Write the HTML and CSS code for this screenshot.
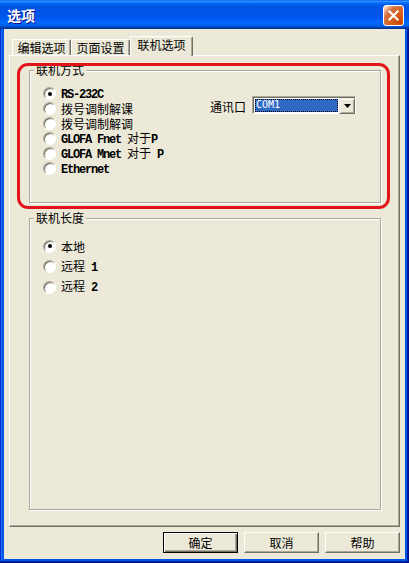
FILE: index.html
```html
<!DOCTYPE html>
<html>
  <head>
    <meta charset="UTF-8">
    <link rel="stylesheet" href="styles.css">
  </head>
  <body>
    <div class="window">
      <div class="titlebar">
        <span class="title">选项</span>
        <span class="close">
          <svg width="13" height="13" viewBox="0 0 13 13"><path d="M2.5 2.5 L10.5 10.5 M10.5 2.5 L2.5 10.5" stroke="#fff" stroke-width="2.2" stroke-linecap="square"/></svg>
        </span>
      </div>
      <div class="client">
        <div class="tabs">
          <div class="tab">编辑选项</div>
          <div class="tab">页面设置</div>
          <div class="tab active">联机选项</div>
        </div>
        <div class="panel">
          <div class="group group-mode">
            <div class="group-title">联机方式</div>
            <div class="group-body">
              <ul class="radios">
                <li><span class="radio checked"></span><span class="label"><span class="en">RS-232C</span></span></li>
                <li><span class="radio"></span><span class="label">拨号调制解课</span></li>
                <li><span class="radio"></span><span class="label">拨号调制解调</span></li>
                <li><span class="radio"></span><span class="label"><span class="en">GLOFA Fnet </span>对于<span class="en">P</span></span></li>
                <li><span class="radio"></span><span class="label"><span class="en">GLOFA Mnet </span>对于<span class="en"> P</span></span></li>
                <li><span class="radio"></span><span class="label"><span class="en">Ethernet</span></span></li>
              </ul>
              <div class="port">
                <span class="port-label">通讯口</span>
                <div class="combo">
                  <span class="combo-value">COM1</span>
                  <span class="combo-btn">
                    <svg width="7" height="4" viewBox="0 0 7 4"><path d="M0 0 H7 L3.5 4 Z" fill="#000"/></svg>
                  </span>
                </div>
              </div>
            </div>
          </div>
          <div class="group group-len">
            <div class="group-title">联机长度</div>
            <ul class="radios wide">
              <li><span class="radio checked"></span><span class="label">本地</span></li>
              <li><span class="radio"></span><span class="label">远程<span class="en"> 1</span></span></li>
              <li><span class="radio"></span><span class="label">远程<span class="en"> 2</span></span></li>
            </ul>
          </div>
        </div>
        <div class="buttons">
          <button class="btn default">确定</button>
          <button class="btn">取消</button>
          <button class="btn">帮助</button>
        </div>
        <div class="highlight"></div>
      </div>
    </div>
  </body>
</html>
```

FILE: styles.css
```css
body {
  margin: 0;
  font-family: "Noto Sans CJK SC", sans-serif;
  font-size: 12px;
  color: #000;
}

.window {
  width: 409px;
  height: 563px;
  box-sizing: border-box;
  padding: 0 4px 4px 4px;
  background: #0055ea;
  box-shadow: inset -1px -1px #00138c, inset 1px 1px #0831d9, inset -2px -2px #001ea0, inset 2px 2px #166aee;
  display: flex;
  flex-direction: column;
}

.titlebar {
  height: 29px;
  margin: 0 -4px;
  padding: 0 5px 0 7px;
  display: flex;
  align-items: center;
  justify-content: space-between;
  background: linear-gradient(to bottom, #0058ee 0%, #3593ff 4%, #288eff 6%, #127dff 8%, #036ffc 10%, #0262ee 14%, #0057e5 20%, #0054e3 24%, #0055eb 56%, #005bf5 66%, #026afe 76%, #0062ef 86%, #0052d6 92%, #0040ab 94%, #003092 100%);
}

.title {
  color: #fff;
  font-weight: bold;
  font-size: 14px;
  line-height: 16px;
  text-shadow: 1px 1px #0f1089;
}

.close {
  width: 21px;
  height: 21px;
  margin-top: 1px;
  box-sizing: border-box;
  border: 1px solid #fff;
  border-radius: 3px;
  display: flex;
  align-items: center;
  justify-content: center;
  background: radial-gradient(circle at 90% 90%, #cc4600 0%, #dc6527 55%, #cd7546 70%, #ffccb2 90%, #fff 100%);
}

.client {
  flex: 1;
  position: relative;
  background: #ece9d8;
  padding: 7px 5px 6px 5px;
  display: flex;
  flex-direction: column;
}

.tabs {
  height: 19px;
  padding-left: 3px;
  display: flex;
  align-items: flex-end;
}

.tab {
  height: 16px;
  box-sizing: border-box;
  width: 59px;
  text-align: center;
  line-height: 15px;
  border-top: 1px solid #fff;
  border-left: 1px solid #fff;
  border-right: 1px solid #716f64;
  box-shadow: inset -1px 0 #aca899;
  border-radius: 2px 2px 0 0;
  background: #ece9d8;
}

.tab.active {
  width: 63px;
  height: 20px;
  margin-bottom: -1px;
  line-height: 16px;
  position: relative;
  z-index: 1;
}

.panel {
  height: 472px;
  box-sizing: border-box;
  border: 1px solid;
  border-color: #fff #716f64 #716f64 #fff;
  box-shadow: inset -1px -1px #aca899;
  padding: 14px 18px 0 19px;
  display: flex;
  flex-direction: column;
  gap: 15px;
}

.group {
  box-sizing: border-box;
  border: 1px solid #aca899;
  box-shadow: inset 1px 1px #fff, 1px 1px #fff;
  display: flex;
  flex-direction: column;
}

.group-mode {
  height: 133px;
}

.group-len {
  height: 292px;
}

.group-title {
  align-self: flex-start;
  margin: -8px 0 0 4px;
  padding: 0 2px;
  line-height: 14px;
  background: #ece9d8;
}

.group-body {
  display: flex;
  align-items: flex-start;
  margin-top: 9px;
}

.radios {
  list-style: none;
  margin: 9px 0 0 0;
  padding: 0 0 0 13px;
  width: 180px;
  box-sizing: border-box;
}

.group-body .radios {
  margin-top: 0;
}

.radios li {
  height: 15px;
  line-height: 15px;
  display: flex;
  align-items: center;
  white-space: pre;
}

.radios.wide {
  margin-top: 11px;
}

.radios.wide li {
  height: 20.5px;
}

.label {
  line-height: 15px;
}

.radio {
  width: 13px;
  height: 13px;
  box-sizing: border-box;
  margin-right: 5px;
  border-radius: 50%;
  border: 1px solid;
  border-color: #aca899 #fff #fff #aca899;
  box-shadow: inset 1px 1px #716f64;
  background: #fff;
  display: flex;
  align-items: center;
  justify-content: center;
  flex-shrink: 0;
}

.radio.checked::after {
  content: "";
  width: 4px;
  height: 4px;
  border-radius: 50%;
  background: #000;
}

.en {
  font-family: "Liberation Mono", monospace;
  font-size: 12px;
  letter-spacing: -1.2px;
  font-weight: bold;
}

.port {
  display: flex;
  align-items: center;
  margin-top: 9px;
}

.port-label {
  width: 36px;
  margin-right: 6px;
  padding-top: 5px;
  line-height: 14px;
}

.combo {
  width: 104px;
  height: 18px;
  box-sizing: border-box;
  border: 1px solid;
  border-color: #aca899 #fff #fff #aca899;
  box-shadow: inset 1px 1px #716f64;
  background: #fff;
  display: flex;
  padding: 1px 0 0 1px;
}

.combo-value {
  flex: 1;
  margin: 1px;
  background: #316ac5;
  outline: 1px dotted #000;
  outline-offset: -1px;
  color: #fff;
  font-family: "DejaVu Sans Mono", monospace;
  font-size: 10px;
  line-height: 12px;
  padding-left: 1px;
}

.combo-btn {
  width: 16px;
  height: 16px;
  box-sizing: border-box;
  background: #ece9d8;
  border: 1px solid;
  border-color: #ece9d8 #716f64 #716f64 #ece9d8;
  box-shadow: inset 1px 1px #fff, inset -1px -1px #aca899;
  display: flex;
  align-items: center;
  justify-content: center;
}

.buttons {
  margin-top: 5px;
  display: flex;
  justify-content: flex-end;
  gap: 6px;
}

.btn {
  width: 75px;
  height: 21px;
  padding: 0;
  font-family: "Noto Sans CJK SC", sans-serif;
  font-size: 12px;
  color: #000;
  background: #ece9d8;
  border: 1px solid;
  border-color: #fff #716f64 #716f64 #fff;
  box-shadow: inset -1px -1px #aca899;
}

.btn.default {
  border: 1px solid #000;
  box-shadow: inset 1px 1px #fff, inset -1px -1px #716f64, inset -2px -2px #aca899;
}

.highlight {
  position: absolute;
  left: 13px;
  top: 34px;
  width: 373px;
  height: 146px;
  box-sizing: border-box;
  border: 3px solid #e3141c;
  border-radius: 11px;
  pointer-events: none;
}
```
